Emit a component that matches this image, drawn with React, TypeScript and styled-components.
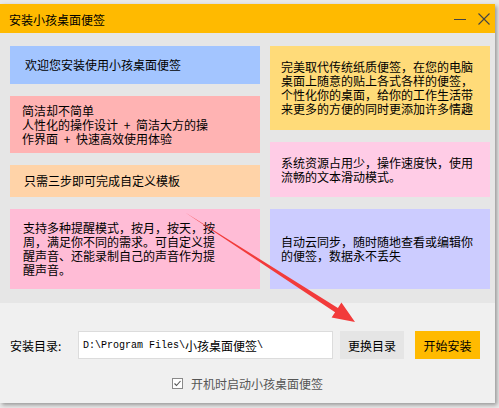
import React from 'react';
import styled, { createGlobalStyle } from 'styled-components';

const GlobalStyle = createGlobalStyle`
  html, body {
    margin: 0;
    padding: 0;
    background: #e9e9e9;
  }
  body {
    font-family: "Noto Sans CJK SC", "Liberation Sans", sans-serif;
    font-size: 12px;
    color: #000;
  }
`

const Page = styled.div`
  position: relative;
  width: 499px;
  height: 408px;
  padding-top: 4px;
  box-sizing: border-box;
`

const Window = styled.div`
  width: 495px;
  height: 399px;
  display: flex;
  flex-direction: column;
  box-shadow: 2px 2px 4px rgba(0, 0, 0, 0.35);
`

const TitleBar = styled.div`
  height: 29px;
  background: #ffba00;
  display: flex;
  align-items: center;
  padding: 2px 5px 0 9px;
  box-sizing: border-box;
  flex-shrink: 0;
`

const Title = styled.div`
  flex: 1;
  font-size: 12px;
  line-height: 14px;
`

const WinButtons = styled.div`
  display: flex;
  align-items: center;
  gap: 12px;
  margin-top: -2px;
`

const Content = styled.div`
  flex: 1;
  background: #e6e6e6;
  display: flex;
  gap: 10px;
  padding: 13px 5px 14px 10px;
`

const Column = styled.div<{ $width: number }>`
  width: ${p => p.$width}px;
  display: flex;
  flex-direction: column;
  gap: 12px;
`

const Card = styled.div<{ $bg: string; $h: number; $pl?: number }>`
  height: ${p => p.$h}px;
  background: ${p => p.$bg};
  display: flex;
  align-items: center;
  padding-left: ${p => p.$pl ?? 12}px;
  box-sizing: border-box;
`

const CardText = styled.p`
  margin: 0;
  width: 194px;
  font-size: 12px;
  line-height: 14px;
  word-spacing: 3px;
`

const Footer = styled.div`
  height: 100px;
  background: #f0f0f0;
  flex-shrink: 0;
  display: flex;
  flex-direction: column;
  padding-top: 28px;
  box-sizing: border-box;
`

const DirRow = styled.div`
  display: flex;
  align-items: center;
  padding-left: 10px;
`

const Label = styled.span`
  width: 68px;
  font-size: 12px;
`

const PathBox = styled.div`
  width: 255px;
  height: 28px;
  background: #fff;
  border: 1px solid #dcdcdc;
  box-sizing: border-box;
  display: flex;
  align-items: center;
  padding-left: 4px;
  white-space: nowrap;
  overflow: hidden;
`

const Ascii = styled.span`
  font-family: "Liberation Mono", monospace;
  font-size: 10px;
`

const Cjk = styled.span`
  font-size: 12px;
`

const Button = styled.button<{ $primary?: boolean }>`
  height: 28px;
  width: ${p => (p.$primary ? 65 : 64)}px;
  margin-left: ${p => (p.$primary ? 11 : 7)}px;
  border: none;
  padding: 0;
  background: ${p => (p.$primary ? '#ffba00' : '#e5e5e5')};
  font-family: "Noto Sans CJK SC", sans-serif;
  font-size: 12px;
  color: #000;
`

const CheckRow = styled.label`
  display: flex;
  align-items: center;
  justify-content: center;
  gap: 8px;
  margin-top: 16px;
  color: #555;
  font-size: 12px;
`

const CheckBox = styled.span`
  width: 11px;
  height: 11px;
  border: 1px solid #8a8a8a;
  background: #fff;
  box-sizing: border-box;
  display: flex;
  align-items: center;
  justify-content: center;
`

const ArrowLayer = styled.svg`
  position: absolute;
  left: 0;
  top: 0;
  pointer-events: none;
`

export default function App() {
  return (
    <>
      <GlobalStyle />
      <Page>
        <Window>
          <TitleBar>
            <Title>安装小孩桌面便签</Title>
            <WinButtons>
              <svg width="12" height="12" viewBox="0 0 12 12">
                <line x1="0" y1="6.5" x2="12" y2="6.5" stroke="#444" strokeWidth="1" />
              </svg>
              <svg width="12" height="12" viewBox="0 0 12 12">
                <path d="M0.5 0.5 L11.5 11.5 M11.5 0.5 L0.5 11.5" stroke="#444" strokeWidth="1.1" />
              </svg>
            </WinButtons>
          </TitleBar>
          <Content>
            <Column $width={250}>
              <Card $bg="#a3c5ff" $h={38} $pl={15}>
                <CardText>欢迎您安装使用小孩桌面便签</CardText>
              </Card>
              <Card $bg="#ffb3b3" $h={57}>
                <CardText>简洁却不简单<br />人性化的操作设计 + 简洁大方的操作界面 + 快速高效使用体验</CardText>
              </Card>
              <Card $bg="#ffd3a8" $h={32} $pl={14}>
                <CardText>只需三步即可完成自定义模板</CardText>
              </Card>
              <Card $bg="#ffbcd6" $h={80} $pl={13}>
                <CardText>支持多种提醒模式，按月，按天，按周，满足你不同的需求。可自定义提醒声音、还能录制自己的声音作为提醒声音。</CardText>
              </Card>
            </Column>
            <Column $width={220}>
              <Card $bg="#ffdb79" $h={84} $pl={11}>
                <CardText>完美取代传统纸质便签，在您的电脑桌面上随意的贴上各式各样的便签，个性化你的桌面，给你的工作生活带来更多的方便的同时更添加许多情趣</CardText>
              </Card>
              <Card $bg="#ffcce6" $h={55} $pl={11}>
                <CardText>系统资源占用少，操作速度快，使用流畅的文本滑动模式。</CardText>
              </Card>
              <Card $bg="#ccccff" $h={80} $pl={11}>
                <CardText>自动云同步，随时随地查看或编辑你的便签，数据永不丢失</CardText>
              </Card>
            </Column>
          </Content>
          <Footer>
            <DirRow>
              <Label>安装目录:</Label>
              <PathBox>
                <Ascii>D:\Program Files\</Ascii>
                <Cjk>小孩桌面便签</Cjk>
                <Ascii>\</Ascii>
              </PathBox>
              <Button>更换目录</Button>
              <Button $primary>开始安装</Button>
            </DirRow>
            <CheckRow>
              <CheckBox>
                <svg width="9" height="9" viewBox="0 0 9 9">
                  <path d="M1.5 4.5 L3.5 6.5 L7.5 2" fill="none" stroke="#555" strokeWidth="1.1" />
                </svg>
              </CheckBox>
              开机时启动小孩桌面便签
            </CheckRow>
          </Footer>
        </Window>
        <ArrowLayer width="499" height="408" viewBox="0 0 499 408">
          <polygon
            points="184.8,212.2 337.9,307.9 341.4,302.5 355,322 331.6,317.6 335.1,312.2 185.2,212.6"
            fill="#f23b3b"
          />
        </ArrowLayer>
      </Page>
    </>
  );
}
